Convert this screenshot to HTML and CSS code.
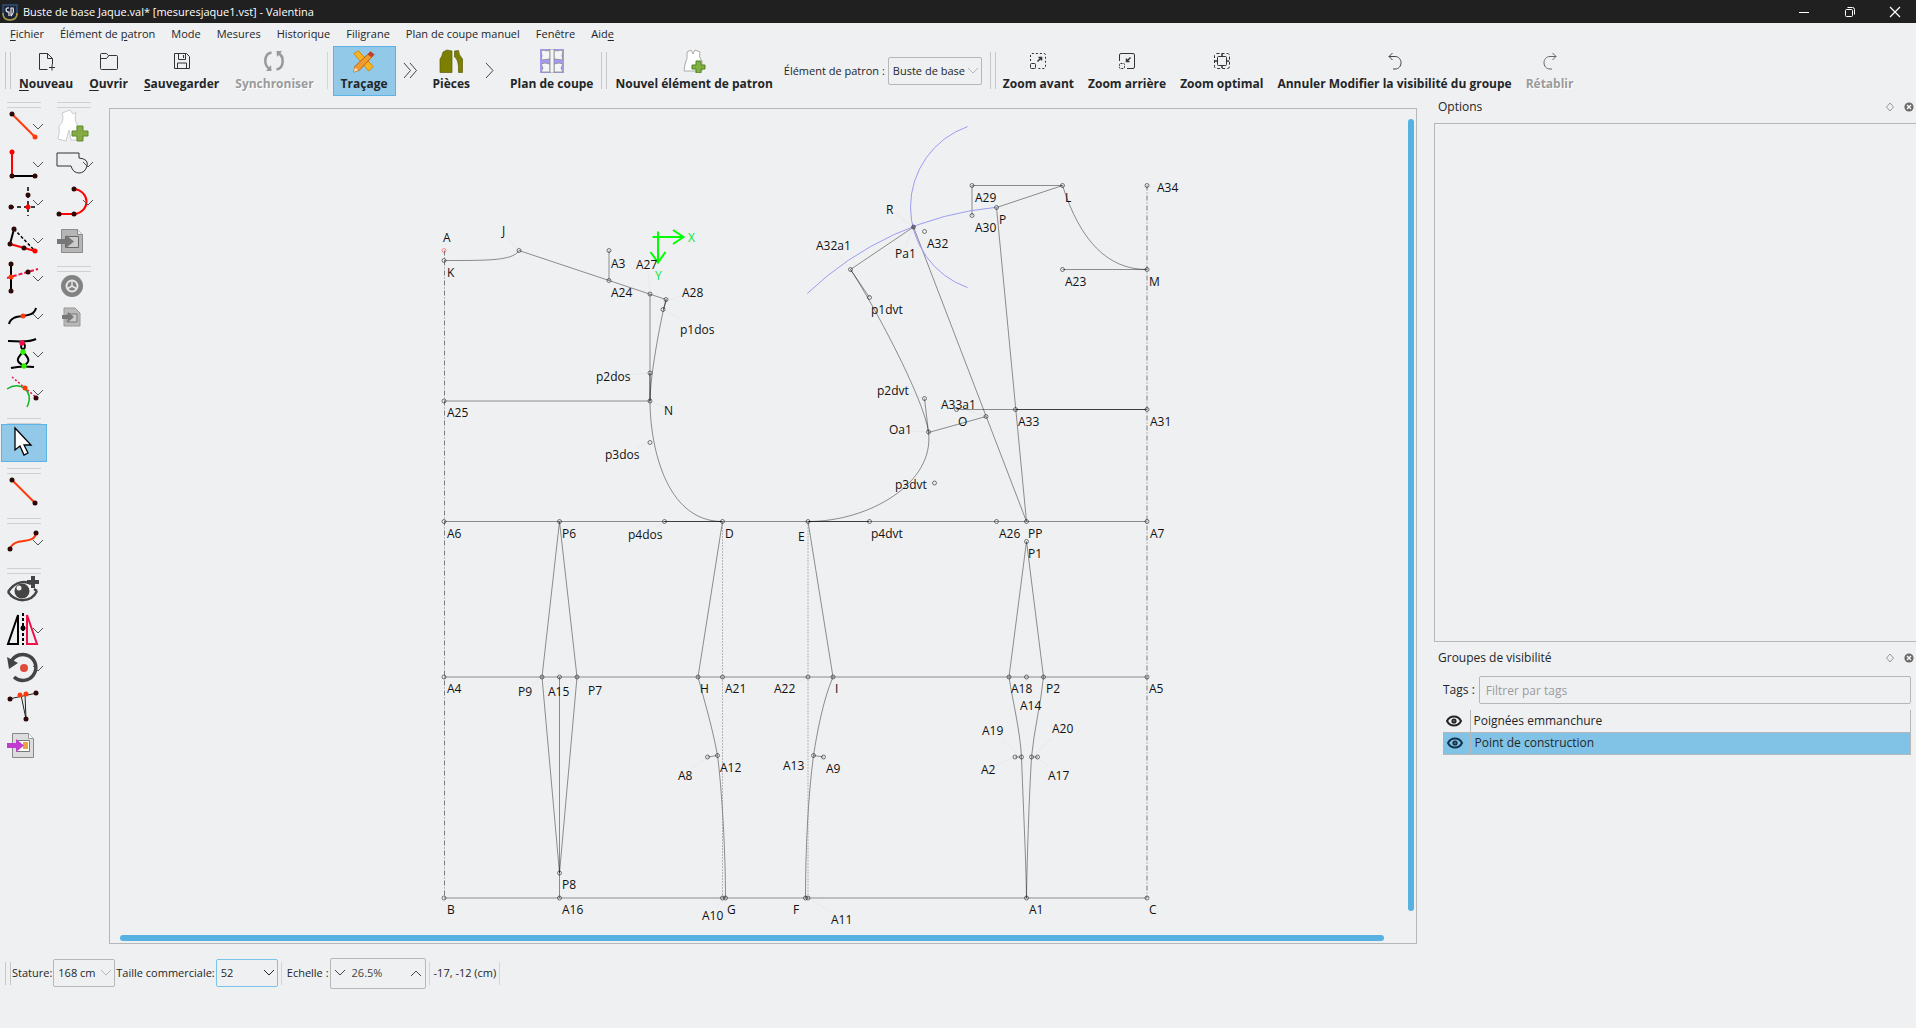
FILE: index.html
```html
<!DOCTYPE html>
<html lang="fr">
<head>
<meta charset="utf-8">
<title>Buste de base Jaque.val* [mesuresjaque1.vst] - Valentina</title>
<link rel="stylesheet" href="styles.css">
</head>
<body>
<svg class="defs" width="0" height="0" aria-hidden="true">
  <defs>
    <symbol id="chev" viewBox="0 0 12 8"><path d="M1 1l5 5 5-5" fill="none" stroke="currentColor"/></symbol>
    <symbol id="eye" viewBox="0 0 16 12"><path d="M1 6C4 0 12 0 15 6C12 12 4 12 1 6Z" fill="none" stroke="currentColor" stroke-width="2"/><circle cx="8" cy="6" r="2.6" fill="currentColor"/><circle cx="8" cy="6" r="0.7" fill="#9ab"/></symbol>
    <symbol id="float" viewBox="0 0 10 10"><path d="M5 1l3.500 4L5 9 1.500 5Z" fill="none" stroke="#999"/></symbol>
    <symbol id="close" viewBox="0 0 10 10"><circle cx="5" cy="5" r="4.600" fill="#6b6b6b"/><path d="M3 3l4 4M7 3l-4 4" stroke="#fff" stroke-width="1.300"/></symbol>
  </defs>
</svg>

<header class="titlebar">
  <svg class="logo" width="16" height="18" viewBox="0 0 16 18"><path d="M1 2h14v9c0 4-3 6-7 6s-7-2-7-6Z" fill="#1b2337" stroke="#31507c" stroke-width="1.500"/><path d="M1 10c0 5 3 7 7 7s7-2 7-7" fill="none" stroke="#b39a3a" stroke-width="1.500"/><path d="M7 5c-4-1-4 4 0 4v4M9 13V5l2 0c1 3 0 6-2 8" fill="none" stroke="#e8e8ee" stroke-width="1.200"/></svg>
  <h1>Buste de base Jaque.val* [mesuresjaque1.vst] - Valentina</h1>
  <div class="winbtns">
    <button aria-label="Réduire"><svg width="12" height="12" viewBox="0 0 12 12"><path d="M1 6.500h10" stroke="#fff"/></svg></button>
    <button aria-label="Restaurer"><svg width="12" height="12" viewBox="0 0 12 12" fill="none" stroke="#fff"><rect x="1.500" y="3.500" width="7" height="7" rx="1"/><path d="M3.500 1.500h5q2 0 2 2v5"/></svg></button>
    <button aria-label="Fermer"><svg width="12" height="12" viewBox="0 0 12 12"><path d="M1 1l10 10M11 1L1 11" stroke="#fff" stroke-width="1.200"/></svg></button>
  </div>
</header>

<nav class="menubar">
  <a href="#"><u>F</u>ichier</a><a href="#">Élément de <u>p</u>atron</a><a href="#">Mode</a><a href="#">Mesures</a><a href="#">Historique</a><a href="#">Filigrane</a><a href="#">Plan de coupe manuel</a><a href="#">Fenêtre</a><a href="#">Aid<u>e</u></a>
</nav>

<div class="toolbar">
  <div class="grip"></div>
  <button class="tb"><svg width="24" height="24" viewBox="0 0 24 24" fill="none" stroke="#333"><path d="M13.500 20.500h-8v-16h8l5 5v6M13.500 4.500v5h5M15 18.500h6M18 15.500v6"/></svg><span><u>N</u>ouveau</span></button>
  <button class="tb"><svg width="24" height="24" viewBox="0 0 24 24" fill="none" stroke="#333"><path d="M3.500 19.500v-14q0-1 1-1h5l2 2h8q1 0 1 1v12q0 1-1 1h-15q-1 0-1-1ZM3.500 9.500h6l2-2.500"/></svg><span><u>O</u>uvrir</span></button>
  <button class="tb"><svg width="24" height="24" viewBox="0 0 24 24" fill="none" stroke="#333"><path d="M4.500 4.500h12l3 3v12h-15ZM8.500 4.500v6h7v-6M13.500 6v3M7.500 20v-6h9v6"/></svg><span><u>S</u>auvegarder</span></button>
  <button class="tb" disabled><svg width="24" height="24" viewBox="0 0 24 24" fill="none" stroke="#999" stroke-width="2.500"><path d="M9.500 3.500C1.500 5 1.500 17 8 20M14.500 20.500C22.500 19 22.500 7 16 4"/><path d="M9 16l.5 6H4ZM15 8l-.5-6H20Z" fill="#999" stroke="none"/></svg><span>Synchroniser</span></button>
  <div class="rule"></div>
  <button class="tb on"><svg width="26" height="26" viewBox="0 0 26 26"><path d="M2 5l5-3 16 17-5 5Z" fill="#f9b320" stroke="#c98a12"/><path d="M20 3l4 3L8 23l-6 2 1-6Z" fill="#f29a2e" stroke="#a8631a"/><path d="M20 3l4 3-3 3-4-3Z" fill="#c33a32"/><path d="M3 20l4 3-5 2Z" fill="#f6dcb0"/></svg><span>Traçage</span></button>
  <svg class="arrow" width="15" height="17" viewBox="0 0 15 17" fill="none" stroke="#444"><path d="M1 1l6.500 7.500L1 16M7 1l6.500 7.500L7 16"/></svg>
  <button class="tb"><svg width="24" height="24" viewBox="0 0 24 24" fill="#7c7f00" stroke="#5b5e10" stroke-width=".7"><path d="M1 23.500V10q2-2 3-7l4-2 5 1v21.500Z"/><path d="M15.500 2l4-.5q0 4 4 8.500v13.500h-4Q20 10 15.500 8Z"/></svg><span>Pièces</span></button>
  <svg class="arrow" width="10" height="17" viewBox="0 0 10 17" fill="none" stroke="#444"><path d="M1 1l7 7.500L1 16"/></svg>
  <button class="tb"><svg width="24" height="24" viewBox="0 0 24 24"><path fill="#a49bf5" d="M0 0h24v24H0z"/><g fill="#f4f5f6" stroke="#888" stroke-width=".8"><path d="M1 2l3-1 2 1 4-1v9l-9 1q2-4 0-9ZM23 2l-3-1-2 1-4-1v9l9 1q-2-4 0-9ZM1 15l4-1 5 1v8H1l2-4ZM23 15l-4-1-5 1v8h9l-2-4Z"/><path d="M10 0h4v24h-4z"/></g></svg><span>Plan de coupe</span></button>
  <div class="grip"></div>
  <button class="tb"><svg width="24" height="24" viewBox="0 0 24 24"><path d="M5 3l4-2 2 4 2-4 5 2q-2 5 2 9v10H2l1-7q3-5 2-12Z" fill="#fff" stroke="#aaa"/><path d="M14 12h5v4h4v4h-4v4h-5v-4h-4v-4h4Z" fill="#7fb23f" stroke="#557e28"/></svg><span>Nouvel élément de patron</span></button>
  <label class="lbl" for="piece">Élément de patron :</label>
  <div class="combo wide"><select id="piece"><option>Buste de base</option></select><svg class="dim" width="12" height="8"><use href="#chev"/></svg></div>
  <div class="grip"></div>
  <div class="views">
    <button class="tb"><svg width="24" height="24" viewBox="0 0 24 24" fill="none" stroke="#333"><path d="M4.500 12V6q0-1.500 1.500-1.500h12q1.500 0 1.500 1.500v12q0 1.500-1.500 1.500h-6" stroke-dasharray="2 2"/><rect x="4.500" y="14.500" width="5" height="5" rx="1"/><path d="M11.500 12.500l4-4M12.500 8.500h3v3" stroke-width="1.500"/></svg><span>Zoom avant</span></button>
    <button class="tb"><svg width="24" height="24" viewBox="0 0 24 24" fill="none" stroke="#333"><path d="M4.500 12V6q0-1.500 1.500-1.500h12q1.500 0 1.500 1.500v12q0 1.500-1.500 1.500h-6"/><rect x="4.500" y="14.500" width="5" height="5" rx="1" stroke-dasharray="2 1"/><path d="M15.500 8.500l-4 4M11.500 9.500v3h3" stroke-width="1.500"/></svg><span>Zoom arrière</span></button>
    <button class="tb"><svg width="24" height="24" viewBox="0 0 24 24" fill="none" stroke="#333"><rect x="4.500" y="4.500" width="15" height="15" rx="2" stroke-dasharray="3 2"/><rect x="7.500" y="7.500" width="9" height="9" rx="1"/><path d="M11 6h2M11 18h2M6 11v2M18 11v2" stroke-width="1.500"/></svg><span>Zoom optimal</span></button>
    <button class="tb"><svg width="24" height="24" viewBox="0 0 24 24" fill="none" stroke="#444"><path d="M9.500 4l-3.500 3.500L9.500 11M6 7.500h6c8 0 8 12.500 0 12.500h-2"/></svg><span>Annuler Modifier la visibilité du groupe</span></button>
    <button class="tb" disabled><svg width="24" height="24" viewBox="0 0 24 24" fill="none" stroke="#666"><path d="M14.500 4l3.500 3.500-3.500 3.500M18 7.500h-6c-8 0-8 12.500 0 12.500h2"/></svg><span>Rétablir</span></button>
  </div>
</div>

<main class="work">
  <aside class="palettes">
    <div class="palette">
      <div class="sep"></div>
      <button class="tool" aria-label="Point"><svg width="38" height="36" viewBox="0 0 38 36"><path d="M6 6l23 23" stroke="#ff3a0a" stroke-width="2"/><circle cx="6" cy="6" r="2.500" fill="#2a0a08"/><circle cx="29" cy="29" r="2.500" fill="#ff3a0a"/></svg><svg class="dd" width="12" height="8"><use href="#chev"/></svg></button>
      <button class="tool" aria-label="Perpendiculaire"><svg width="38" height="36" viewBox="0 0 38 36"><path d="M6 6v24" stroke="#f00" stroke-width="2"/><path d="M6 30h23" stroke="#000" stroke-width="2"/><circle cx="6" cy="6" r="2.500" fill="#f00"/><circle cx="6" cy="30" r="2.500" fill="#300808"/><circle cx="29" cy="30" r="2.500" fill="#300808"/></svg><svg class="dd" width="12" height="8"><use href="#chev"/></svg></button>
      <button class="tool" aria-label="Intersection"><svg width="38" height="36" viewBox="0 0 38 36"><path d="M4 23h28M22 3v29" stroke="#000" stroke-width="1.500" stroke-dasharray="4 3"/><circle cx="5" cy="23" r="2.500" fill="#300808"/><circle cx="22" cy="11" r="2.500" fill="#300808"/><circle cx="22" cy="23" r="2.500" fill="#f00"/></svg><svg class="dd" width="12" height="8"><use href="#chev"/></svg></button>
      <button class="tool" aria-label="Triangle"><svg width="38" height="36" viewBox="0 0 38 36"><path d="M8 7L4 22" stroke="#000" stroke-width="2"/><path d="M8 7l21 22" stroke="#000" stroke-width="1.500" stroke-dasharray="3 2"/><path d="M4 22l25 7" stroke="#f00" stroke-width="2"/><g fill="#300808"><circle cx="8" cy="7" r="2.500"/><circle cx="4" cy="22" r="2.500"/><circle cx="18" cy="26" r="2.500"/></g><circle cx="29" cy="29" r="2.500" fill="#f00"/></svg><svg class="dd" width="12" height="8"><use href="#chev"/></svg></button>
      <button class="tool" aria-label="Intersection ligne et axe"><svg width="38" height="36" viewBox="0 0 38 36"><path d="M5 4v27" stroke="#000" stroke-width="2"/><path d="M1 18l31-9" stroke="#f0104a" stroke-width="2" stroke-dasharray="4 2"/><circle cx="5" cy="4" r="2.500" fill="#300808"/><circle cx="5" cy="31" r="2.500" fill="#300808"/><circle cx="22" cy="12" r="2.500" fill="#300808"/><circle cx="5" cy="17" r="2.500" fill="#ff3a0a"/></svg><svg class="dd" width="12" height="8"><use href="#chev"/></svg></button>
      <button class="tool" aria-label="Point sur courbe"><svg width="38" height="36" viewBox="0 0 38 36"><path d="M3 26c3-13 24-3 27-16" fill="none" stroke="#000" stroke-width="2"/><circle cx="17" cy="18" r="2.500" fill="#ff3a0a"/></svg><svg class="dd" width="12" height="8"><use href="#chev"/></svg></button>
      <button class="tool" aria-label="Intersection de courbes"><svg width="38" height="36" viewBox="0 0 38 36"><path d="M2 5c9 0 20 2 28-2M5 32c8-2 15-2 23-1M16 7c-4 8 6 8 2 0M17 16c-8 8-6 10 1 14M17 16c8 8 6 10 1 14" fill="none" stroke="#000" stroke-width="2"/><circle cx="16" cy="7" r="2.700" fill="#f0104a"/><circle cx="17" cy="16" r="2.700" fill="#2cf000"/><circle cx="18" cy="30" r="2.700" fill="#2cf000"/></svg><svg class="dd" width="12" height="8"><use href="#chev"/></svg></button>
      <button class="tool" aria-label="Tangente"><svg width="38" height="36" viewBox="0 0 38 36"><path d="M6 3l25 21" stroke="#f0104a" stroke-dasharray="2 2" stroke-width="1.500"/><path d="M1 15c13-9 28 2 20 18" fill="none" stroke="#12b42a" stroke-width="1.500"/><circle cx="19" cy="14" r="2.500" fill="#ff3a0a"/><circle cx="30" cy="24" r="2.500" fill="#300808"/></svg><svg class="dd" width="12" height="8"><use href="#chev"/></svg></button>
      <div class="sep"></div>
      <button class="tool on" aria-label="Sélection"><svg width="38" height="36" viewBox="0 0 38 36"><path d="M9 3v22l5-4 4 9 4-2-4-8h7Z" fill="#fff" stroke="#000" stroke-width="1.300"/></svg></button>
      <div class="sep"></div>
      <button class="tool" aria-label="Ligne"><svg width="38" height="36" viewBox="0 0 38 36"><path d="M6 6l23 23" stroke="#ff3a0a" stroke-width="2"/><circle cx="6" cy="6" r="2.500" fill="#2a0a08"/><circle cx="29" cy="29" r="2.500" fill="#2a0a08"/></svg></button>
      <div class="sep"></div>
      <button class="tool" aria-label="Courbe"><svg width="38" height="36" viewBox="0 0 38 36"><path d="M4 25c4-13 24-3 26-16" fill="none" stroke="#ff3a0a" stroke-width="2"/><circle cx="4" cy="25" r="2.500" fill="#300808"/><circle cx="30" cy="9" r="2.500" fill="#300808"/></svg><svg class="dd" width="12" height="8"><use href="#chev"/></svg></button>
      <div class="sep"></div>
      <button class="tool" aria-label="Groupe"><svg width="38" height="36" viewBox="0 0 38 36"><path d="M2 18c8-12 18-11 23-8M2 18c8 11 23 11 29-1M31 17l-3-2" fill="none" stroke="#444" stroke-width="2.500"/><circle cx="16" cy="17" r="7.500" fill="#444"/><circle cx="13" cy="14" r="2.500" fill="#eff0f1"/><path d="M27 2v12M21 8h12" stroke="#444" stroke-width="4"/></svg></button>
      <button class="tool" aria-label="Symétrie"><svg width="38" height="36" viewBox="0 0 38 36" fill="none" stroke-width="2"><path d="M12 3v29H2Z" stroke="#000"/><path d="M21 3v29h10Z" stroke="#f0104a"/><path d="M17 1v32" stroke="#000" stroke-dasharray="3 2"/><circle cx="17" cy="16" r="2.500" fill="#000"/></svg><svg class="dd" width="12" height="8"><use href="#chev"/></svg></button>
      <button class="tool" aria-label="Rotation"><svg width="38" height="36" viewBox="0 0 38 36"><path d="M5 12a13 13 0 1 1 3 15" fill="none" stroke="#444" stroke-width="3.500"/><path d="M1 7l2 12 9-6Z" fill="#444"/><circle cx="18" cy="18" r="4" fill="#e04a38"/></svg><svg class="dd" width="12" height="8"><use href="#chev"/></svg></button>
      <button class="tool" aria-label="Pince"><svg width="38" height="36" viewBox="0 0 38 36"><path d="M3 11l28-6M15 7l5 24M19 6l1 25" stroke="#222"/><g fill="#300808"><circle cx="4" cy="11" r="2.500"/><circle cx="30" cy="5" r="2.500"/><circle cx="20" cy="31" r="2.500"/></g><circle cx="14" cy="7" r="2.500" fill="#ff3a0a"/><circle cx="20" cy="6" r="2.500" fill="#ff3a0a"/></svg></button>
      <button class="tool" aria-label="Importer"><svg width="38" height="36" viewBox="0 0 38 36"><path d="M6.500 7.500h16l5 5v19h-21Z" fill="#ddd" stroke="#888"/><path d="M22.500 7.500v5h5" fill="#fff" stroke="#999"/><path d="M10.500 14.500h13v11h-13z" fill="#fff" stroke="#777"/><path d="M17 16h5v7h-5z" fill="#eda53a"/><path d="M1 17h9v-4l8 6.500-8 6.500v-4H1Z" fill="#c23bd0"/></svg></button>
    </div>
    <div class="palette">
      <div class="sep"></div>
      <button class="tool" aria-label="Nouvelle pièce"><svg width="38" height="36" viewBox="0 0 38 36"><path d="M6 5l8-3 3 4 3-2q-2 8 1 12v16h-6l-2-10-3 11-8-2q2-8 1-13 6-5 3-13Z" fill="#fff" stroke="#ccc"/><path d="M21 18h6v5h5v5h-5v5h-6v-5h-5v-5h5Z" fill="#86ab45" stroke="#5f8a2c"/></svg></button>
      <button class="tool" aria-label="Pièce"><svg width="38" height="36" viewBox="0 0 38 36"><path d="M23 12V7H1v13h14q2 7 8 7t8-7-8-8Z" fill="none" stroke="#333"/></svg><svg class="dd" width="12" height="8"><use href="#chev"/></svg></button>
      <button class="tool" aria-label="Union"><svg width="38" height="36" viewBox="0 0 38 36"><path d="M3 30h16M18 5c16 2 17 22 1 25" fill="none" stroke="#f00" stroke-width="2"/><g fill="#300808"><circle cx="3" cy="30" r="2.500"/><circle cx="18" cy="30" r="2.500"/><circle cx="18" cy="5" r="2.500"/></g></svg><svg class="dd" width="12" height="8"><use href="#chev"/></svg></button>
      <button class="tool" aria-label="Exporter"><svg width="38" height="36" viewBox="0 0 38 36"><path d="M5.500 7.500h16l5 5v18h-21Z" fill="#b5b5b5" stroke="#8b8b8b"/><path d="M21.500 7.500v5h5" fill="#eee" stroke="#888"/><path d="M9.500 14.500h13v11h-13z" fill="#ccc" stroke="#666"/><path d="M1 17h9v-4l8 6.500-8 6.500v-4H1Z" fill="#777"/></svg></button>
      <div class="sep"></div>
      <button class="tool small" aria-label="Réglages"><svg width="38" height="30" viewBox="0 0 38 30"><circle cx="16" cy="14" r="11" fill="#828282"/><circle cx="16" cy="14" r="5.500" fill="none" stroke="#e6e6e6" stroke-width="2"/><path d="M16 14v-6M16 14l-5 3M16 14l5 3" stroke="#e6e6e6" stroke-width="1.500"/></svg></button>
      <button class="tool small" aria-label="Importer la pièce"><svg width="38" height="30" viewBox="0 0 38 30"><path d="M8 5h11l5 5v13H8Z" fill="#b9b9b9" stroke="#999"/><path d="M11 11h10v8H11z" fill="#ccc" stroke="#777"/><path d="M6 12h6v-3l6 5-6 5v-3H6Z" fill="#777"/></svg></button>
    </div>
  </aside>

  <section class="canvas">
    <svg class="drawing" viewBox="110 109 1306 834">
      <g class="leader">
        <path d="M506 236l12 14M648 272l2 22M682 296l-15 4M683 321l-20-12M629 375l21-2M665 407l-15-6M637 447l13-5M656 527l8-5M895 213l18 14M906 247l7-20M836 252l14 17M907 393l17 5M910 431l18 1M964 409l22 8M925 483l10 0M1156 187l-9-2M532 686l10-9M588 686l-11-9M690 769l18-12M795 684l13-7M717 908l6-10M831 912l-23-14M1002 739l19 18M1052 738l-20 19M993 767l22-10M1049 767l-12-10M1030 697l-4-20M800 528l8-7"/>
      </g>
      <g class="ln">
        <path d="M444 260.500C486 260.500 513 261 519 250.500M519 250.500L666 299.500M609 250.500v30M650 294v107M444 401h206"/>
        <path d="M666 299.500C663 309 650 373 650 401C650 442 664 521.500 722.500 521.500"/>
        <path d="M444 521.500h703M444 677h703M444 898h703"/>
        <path d="M559.500 521.500L542 677L559.500 873L577 677ZM559.500 677V898"/>
        <path d="M722.500 521.500L698 677C705 703 713 730 717.500 755.500C722 790 725.500 853 725.500 898M707.500 757l10-1.500"/>
        <path d="M808 521.500L833 677C823 700 817 733 813.500 755.500C808 797 805.500 850 805.500 898M823.500 757l-10-1.500"/>
        <path d="M1026.500 541.500L1009 677C1013 703 1020 730 1021.500 757C1023 800 1026 860 1026.500 898C1027 860 1029 800 1031.500 757C1034 730 1041 703 1043.500 677ZM1015 757h6M1032 757h6"/>
        <path d="M972 215.500v-30h90.500L996.500 207.500L1026.500 521.500L913.500 227L850.500 269.500"/>
        <path d="M1062.500 185.500C1080 240 1107 269.500 1147 269.500h-84.500"/>
        <path d="M850.500 269.500C869.500 297.500 924.500 398.500 928.500 432.500C934.500 483 869.500 521.500 808 521.500"/>
        <path d="M850.500 269.500l19 28M924.500 398.500l4 34l57.500-16M956.500 409.500h190"/>
      </g>
      <path class="ln strong" d="M666.500 299.500l-3 10M650 373v28M664 521.500h58M808 521.500h61M1016 409.500h131"/>
      <path class="axis-line" d="M444.500 250.500V898M1147 185.500V898"/>
      <path class="dots" d="M722.500 521.500V898M808 521.500V898"/>
      <path class="arc" d="M807.300 293.500A315.400 315.400 0 0 1 996.300 207.300M967.600 126.600A85.300 85.300 0 0 0 967.600 287.600"/>
      <g class="pt">
        <circle class="red" cx="444" cy="250.500" r="2"/><circle cx="444" cy="260.500" r="2"/><circle cx="519" cy="250.500" r="2"/><circle cx="609" cy="250.500" r="2"/><circle cx="609" cy="280.500" r="2"/><circle cx="650" cy="294" r="2"/><circle cx="666" cy="299.500" r="2"/><circle cx="663" cy="309.500" r="2"/><circle cx="650" cy="373" r="2"/><circle cx="650" cy="401" r="2"/><circle cx="444" cy="401" r="2"/><circle cx="650" cy="442.500" r="2"/>
        <circle cx="444" cy="521.500" r="2"/><circle cx="559.500" cy="521.500" r="2"/><circle cx="664.500" cy="521.500" r="2"/><circle cx="722.500" cy="521.500" r="2"/><circle cx="808" cy="521.500" r="2"/><circle cx="869.500" cy="521.500" r="2"/><circle cx="996.500" cy="521.500" r="2"/><circle cx="1026.500" cy="521.500" r="2"/><circle cx="1147" cy="521.500" r="2"/>
        <circle cx="934.500" cy="483" r="2"/><circle cx="928.500" cy="432" r="2"/><circle cx="986" cy="416.500" r="2"/><circle cx="956.500" cy="409.500" r="2"/><circle cx="1015.500" cy="409.500" r="2"/><circle cx="1147" cy="409.500" r="2"/><circle cx="924.500" cy="398.500" r="2"/><circle cx="869.500" cy="297.500" r="2"/><circle cx="850.500" cy="269.500" r="2"/><circle cx="913.500" cy="227" r="2"/><circle cx="913.500" cy="227" r="1"/><circle cx="924.500" cy="231.500" r="2"/><circle cx="996.500" cy="207.500" r="2"/><circle cx="972" cy="185.500" r="2"/><circle cx="972" cy="215.500" r="2"/><circle cx="1062.500" cy="185.500" r="2"/><circle cx="1147" cy="185.500" r="2"/><circle cx="1062.500" cy="269.500" r="2"/><circle cx="1147" cy="269.500" r="2"/>
        <circle cx="444" cy="677" r="2"/><circle cx="542" cy="677" r="2"/><circle cx="559.500" cy="677" r="2"/><circle cx="577" cy="677" r="2"/><circle cx="698" cy="677" r="2"/><circle cx="722.500" cy="677" r="2"/><circle cx="808" cy="677" r="2"/><circle cx="833" cy="677" r="2"/><circle cx="1009" cy="677" r="2"/><circle cx="1026.500" cy="677" r="2"/><circle cx="1043.500" cy="677" r="2"/><circle cx="1147" cy="677" r="2"/><circle cx="1026.500" cy="541.500" r="2"/>
        <circle cx="707.500" cy="757" r="2"/><circle cx="717.500" cy="755.500" r="2"/><circle cx="813.500" cy="755.500" r="2"/><circle cx="823.500" cy="757" r="2"/><circle cx="1015" cy="757" r="2"/><circle cx="1021.500" cy="757" r="2"/><circle cx="1031.500" cy="757" r="2"/><circle cx="1037.500" cy="757" r="2"/>
        <circle cx="559.500" cy="873" r="2"/><circle cx="444" cy="898" r="2"/><circle cx="559.500" cy="898" r="2"/><circle cx="722.500" cy="898" r="2"/><circle cx="725.500" cy="898" r="2"/><circle cx="805.500" cy="898" r="2"/><circle cx="808" cy="898" r="2"/><circle cx="1026.500" cy="898" r="2"/><circle cx="1147" cy="898" r="2"/>
      </g>
      <path class="origin" d="M652.500 237h31M673 230l10.500 7-10.500 7M658 231.500v31M650.500 252l7.500 10.500 7.500-10.500"/>
      <g class="xy"><text x="688" y="242">X</text><text x="655" y="280">Y</text></g>
      <g class="names">
        <text x="443" y="242">A</text><text x="502" y="235">J</text><text x="447" y="277">K</text><text x="611" y="268">A3</text><text x="636" y="269">A27</text><text x="611" y="297">A24</text><text x="682" y="297">A28</text><text x="680" y="334">p1dos</text><text x="596" y="381">p2dos</text><text x="664" y="415">N</text><text x="447" y="417">A25</text><text x="605" y="459">p3dos</text>
        <text x="447" y="538">A6</text><text x="562" y="538">P6</text><text x="628" y="539">p4dos</text><text x="725" y="538">D</text><text x="798" y="541">E</text><text x="871" y="538">p4dvt</text><text x="999" y="538">A26</text><text x="1028" y="538">PP</text><text x="1150" y="538">A7</text><text x="1028" y="558">P1</text>
        <text x="1157" y="192">A34</text><text x="1065" y="202">L</text><text x="975" y="202">A29</text><text x="975" y="232">A30</text><text x="999" y="224">P</text><text x="927" y="248">A32</text><text x="886" y="214">R</text><text x="816" y="250">A32a1</text><text x="895" y="258">Pa1</text><text x="1065" y="286">A23</text><text x="1149" y="286">M</text><text x="871" y="314">p1dvt</text><text x="877" y="395">p2dvt</text><text x="889" y="434">Oa1</text><text x="941" y="409">A33a1</text><text x="958" y="426">O</text><text x="1018" y="426">A33</text><text x="1150" y="426">A31</text><text x="895" y="489">p3dvt</text>
        <text x="447" y="693">A4</text><text x="518" y="696">P9</text><text x="548" y="696">A15</text><text x="588" y="695">P7</text><text x="700" y="693">H</text><text x="725" y="693">A21</text><text x="774" y="693">A22</text><text x="835" y="693">I</text><text x="1011" y="693">A18</text><text x="1046" y="693">P2</text><text x="1149" y="693">A5</text><text x="1020" y="710">A14</text><text x="982" y="735">A19</text><text x="1052" y="733">A20</text><text x="981" y="774">A2</text><text x="1048" y="780">A17</text><text x="678" y="780">A8</text><text x="720" y="772">A12</text><text x="783" y="770">A13</text><text x="826" y="773">A9</text>
        <text x="562" y="889">P8</text><text x="447" y="914">B</text><text x="562" y="914">A16</text><text x="702" y="920">A10</text><text x="727" y="914">G</text><text x="793" y="914">F</text><text x="831" y="924">A11</text><text x="1029" y="914">A1</text><text x="1149" y="914">C</text>
      </g>
    </svg>
    <div class="vbar"></div>
    <div class="hbar"></div>
  </section>

  <aside class="docks">
    <section class="dock">
      <header class="dockhead"><h2>Options</h2><button aria-label="Détacher"><svg width="10" height="10"><use href="#float"/></svg></button><button aria-label="Fermer"><svg width="10" height="10"><use href="#close"/></svg></button></header>
      <div class="options"></div>
    </section>
    <section class="dock groups">
      <header class="dockhead"><h2>Groupes de visibilité</h2><button aria-label="Détacher"><svg width="10" height="10"><use href="#float"/></svg></button><button aria-label="Fermer"><svg width="10" height="10"><use href="#close"/></svg></button></header>
      <div class="tags"><label for="tags">Tags :</label><input id="tags" type="text" placeholder="Filtrer par tags"></div>
      <table class="grouplist">
        <tr><td class="vis"><svg width="16" height="12"><use href="#eye"/></svg></td><td>Poignées emmanchure</td></tr>
        <tr class="sel"><td class="vis"><svg width="16" height="12"><use href="#eye"/></svg></td><td>Point de construction</td></tr>
      </table>
    </section>
  </aside>
</main>

<footer class="status">
  <div class="grip"></div>
  <label for="height">Stature:</label>
  <div class="combo"><select id="height"><option>168 cm</option></select><svg class="dim" width="12" height="8"><use href="#chev"/></svg></div>
  <label for="size">Taille commerciale:</label>
  <div class="combo active"><select id="size"><option>52</option></select><svg width="12" height="8"><use href="#chev"/></svg></div>
  <div class="rule"></div>
  <label for="scale">Echelle :</label>
  <div class="spin"><button aria-label="Diminuer"><svg width="12" height="8"><use href="#chev"/></svg></button><input id="scale" type="text" value="26.5%"><button aria-label="Augmenter"><svg class="up" width="12" height="8"><use href="#chev"/></svg></button></div>
  <div class="rule"></div>
  <output class="coords">-17, -12 (cm)</output>
  <div class="rule"></div>
</footer>
</body>
</html>
```
FILE: styles.css
```css
* { box-sizing: border-box; }
body {
  margin: 0;
  min-height: 100vh;
  background: #eff0f1;
  color: #232629;
  font: 11px/16px "Open Sans", "Noto Sans", sans-serif;
}
button, input, select { font: inherit; color: inherit; }
button { border: 0; padding: 0; background: none; }
svg { display: block; }
.defs { position: absolute; }
h1, h2 { margin: 0; font: inherit; }
u { text-underline-offset: 2px; }

.titlebar {
  display: flex;
  align-items: center;
  height: 23px;
  padding-left: 2px;
  background: #202020;
  color: #fff;
}
.titlebar h1 { flex: 1; padding-left: 5px; }
.winbtns { display: flex; }
.winbtns button { display: grid; place-items: center; width: 46px; height: 22px; }
.winbtns button:last-child { width: 43px; }

.menubar { display: flex; height: 22px; padding: 3px 2px 0; }
.menubar a { padding: 0 8px; color: inherit; text-decoration: none; }

.toolbar { display: flex; align-items: center; height: 51px; padding: 0 5px; }
.grip {
  flex: none;
  width: 6px;
  height: 37px;
  border: solid #c6c7c8;
  border-width: 0 1px;
}
.rule { flex: none; width: 1px; height: 37px; margin: 0 5px; background: #d4d5d6; }
.tb {
  display: flex;
  flex-direction: column;
  align-items: center;
  gap: 3px;
  height: 50px;
  padding: 2px 7px 0;
  border: 1px solid transparent;
  font-size: 12px;
  font-weight: 700;
  white-space: nowrap;
}
.tb svg { flex: none; height: 24px; }
.views { display: flex; }
.views .tb { padding: 2px 6px 0; }
.tb:disabled { color: #9a9b9c; text-shadow: 1px 1px #fff; }
.tb.on, .tool.on { background: #93c9e8; border: 1px solid #5cb3e4; }
.arrow { flex: none; margin: 0 7px; }
.lbl { padding: 0 3px; white-space: nowrap; }
.combo { position: relative; width: 62px; height: 28px; }
.combo.wide { width: 94px; margin-right: 8px; }
.combo select {
  width: 100%;
  height: 100%;
  padding: 0 4px;
  border: 1px solid #b6b7b8;
  border-radius: 2px;
  background: none;
  appearance: none;
}
.combo.active select { border-color: #7cc3ea; }
.combo svg { position: absolute; right: 3px; top: 10px; pointer-events: none; }
.combo svg.dim { color: #b6b7b8; }

.work {
  display: grid;
  grid-template-columns: 92px minmax(0, 1fr) 482px;
  column-gap: 17px;
  padding: 6px 0 0;
}
.palettes { display: flex; gap: 4px; padding-left: 1px; }
.palette { width: 46px; }
.palette:last-child { width: 41px; }
.sep {
  width: 34px;
  height: 6px;
  margin: 6px 0 0 6px;
  border: solid #cfd0d1;
  border-width: 1px 0;
}
.palette .sep:first-child { margin-top: 0; }
.tool { position: relative; display: block; width: 46px; height: 38px; padding: 0 0 2px 5px; }
.tool.on { padding: 0 0 0 4px; }
.tool.small { height: 31px; }
.palette:last-child .tool { width: 41px; }
.dd { position: absolute; left: 31px; top: 15px; color: #555; }

.canvas { position: relative; margin-top: 6px; border: 1px solid #b6b7b8; }
.drawing { width: 100%; height: auto; font-size: 12px; }
.vbar, .hbar { position: absolute; border-radius: 3px; background: #57b1e1; }
.vbar { right: 2px; top: 10px; bottom: 32px; width: 6px; }
.hbar { left: 10px; right: 32px; bottom: 2px; height: 6px; }

.drawing path { fill: none; }
.leader { stroke: #e8e9ea; }
.ln { stroke: #000; stroke-opacity: .42; }
.ln.strong { stroke-opacity: .55; }
.axis-line { stroke: #7c7d7e; stroke-dasharray: 5 2 1 2; }
.dots { stroke: #7c7d7e; stroke-dasharray: 1 2; }
.arc { stroke: #9c9cf2; }
.pt { fill: none; stroke: #000; stroke-opacity: .5; }
.pt .red { stroke: #f33; }
.origin { stroke: #0f0; stroke-width: 2; }
.xy { fill: #00e840; }
.names { fill: #111; }

.docks { font-size: 12px; }
.dockhead { display: flex; align-items: center; height: 21px; padding: 0 2px 11px 4px; }
.dockhead h2 { flex: 1; }
.dockhead button { margin-left: 9px; }
.options { height: 519px; border: 1px solid #b6b7b8; border-right: 0; }
.groups .dockhead { height: 28px; margin-bottom: 6px; padding-top: 4px; padding-bottom: 0; }
.tags { display: flex; align-items: center; gap: 4px; padding: 0 5px 0 9px; }
.tags input {
  flex: 1;
  min-width: 0;
  height: 28px;
  padding: 0 6px;
  border: 1px solid #b6b7b8;
  border-radius: 2px;
  background: none;
}
.tags input::placeholder { color: #9a9b9c; opacity: 1; }
.grouplist { width: 468px; margin: 6px 5px 0 9px; border-collapse: collapse; }
.grouplist td { height: 22px; padding: 0 3px; border-right: 1px solid #b6b7b8; border-bottom: 1px solid #b6b7b8; }
.grouplist .vis { width: 27px; }
.sel { background: #80c3e7; }
.sel .vis { color: #12334c; }
.grouplist .sel td { padding-left: 4px; }

.status { display: flex; align-items: center; height: 32px; margin-top: 13px; padding-left: 5px; white-space: nowrap; }
.status .grip, .status .rule { height: 23px; }
.status .rule { margin: 0 4px 0 3px; }
.status label { padding: 0 1px; }
.spin { display: flex; align-items: center; width: 96px; height: 31px; padding: 0 3px; border: 1px solid #b6b7b8; border-radius: 2px; color: #444; }
.spin input { flex: 1; width: 0; padding: 0 6px; border: 0; background: none; }
.up { transform: rotate(180deg); }
```
